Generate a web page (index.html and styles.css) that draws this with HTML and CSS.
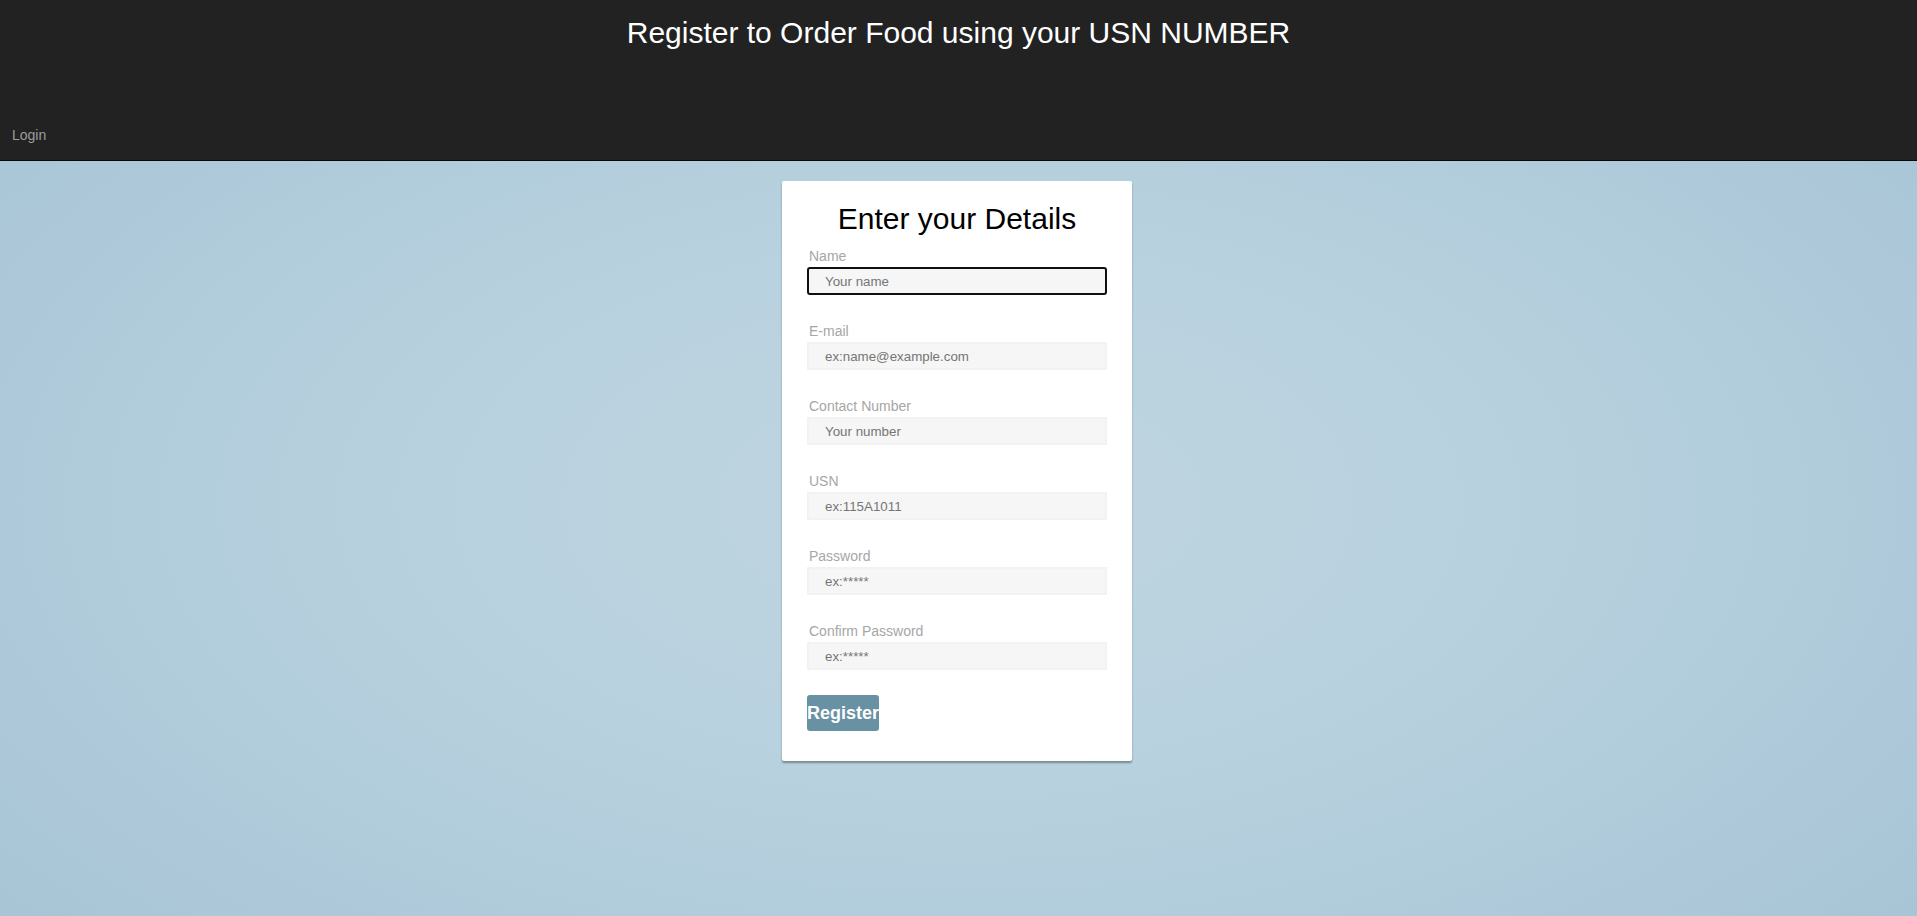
FILE: index.html
```html
<!DOCTYPE html>
<html lang="en">
<head>
<meta charset="utf-8">
<title>Register</title>
<link rel="stylesheet" href="styles.css">
</head>
<body>
<header class="topbar">
  <h1 class="topbar-title">Register to Order Food using your USN NUMBER</h1>
  <nav class="topbar-nav">
    <a class="topbar-link" href="#">Login</a>
  </nav>
</header>
<main class="page">
  <form class="card">
    <h2 class="card-title">Enter your Details</h2>
    <div class="fields">
      <div class="field">
        <label class="field-label" for="name">Name</label>
        <input class="field-input is-focused" id="name" type="text" placeholder="Your name">
      </div>
      <div class="field">
        <label class="field-label" for="email">E-mail</label>
        <input class="field-input" id="email" type="text" placeholder="ex:name@example.com">
      </div>
      <div class="field">
        <label class="field-label" for="phone">Contact Number</label>
        <input class="field-input" id="phone" type="text" placeholder="Your number">
      </div>
      <div class="field">
        <label class="field-label" for="usn">USN</label>
        <input class="field-input" id="usn" type="text" placeholder="ex:115A1011">
      </div>
      <div class="field">
        <label class="field-label" for="pw">Password</label>
        <input class="field-input" id="pw" type="password" placeholder="ex:*****">
      </div>
      <div class="field">
        <label class="field-label" for="pw2">Confirm Password</label>
        <input class="field-input" id="pw2" type="password" placeholder="ex:*****">
      </div>
    </div>
    <div class="actions">
      <button class="btn-register" type="button">Register</button>
    </div>
  </form>
</main>
</body>
</html>
```

FILE: styles.css
```css
html {
  height: 100%;
  background: #a6c4d6;
}

body {
  margin: 0;
  min-height: 100%;
  font-family: "Liberation Sans", Arial, sans-serif;
  background: radial-gradient(ellipse at 50% 55%, #bfd5e0 0%, #b9d2df 35%, #a5c3d5 100%);
  background-attachment: fixed;
}

.topbar {
  height: 160px;
  background: #222222;
  border-bottom: 1px solid #080808;
  display: flex;
  flex-direction: column;
  justify-content: space-between;
}

.topbar-title {
  margin: 16px 0 0;
  font-size: 30px;
  line-height: 33px;
  font-weight: normal;
  color: #ffffff;
  text-align: center;
}

.topbar-nav {
  display: flex;
  padding: 0 0 15px 12px;
}

.topbar-link {
  font-size: 14px;
  line-height: 20px;
  color: #9d9d9d;
  text-decoration: none;
}

.page {
  display: flex;
  justify-content: center;
  padding: 20px 3px 0 0;
}

.card {
  width: 300px;
  padding: 21px 25px 30px;
  background: #ffffff;
  border-radius: 2px;
  box-shadow: 0 2px 2px rgba(0, 0, 0, 0.35);
}

.card-title {
  margin: 0 0 13px;
  font-size: 30px;
  line-height: 33px;
  font-weight: normal;
  color: #000000;
  text-align: center;
}

.fields {
  display: flex;
  flex-direction: column;
  gap: 28px;
}

.field {
  display: flex;
  flex-direction: column;
}

.field-label {
  font-size: 14px;
  line-height: 16px;
  color: #a6a6a6;
  padding-left: 2px;
  margin-bottom: 3px;
}

.field-input {
  box-sizing: border-box;
  width: 300px;
  height: 28px;
  margin: 0;
  padding: 0 16px;
  border: 2px solid #f2f2f2;
  background: #f6f6f6;
  font-family: "Liberation Sans", Arial, sans-serif;
  font-size: 13.333px;
  color: #333333;
  outline: none;
}

.field-input::placeholder {
  color: #757575;
}

.field-input.is-focused {
  border-color: #101010;
  border-radius: 3px;
}

.actions {
  display: flex;
  padding-top: 25px;
}

.btn-register {
  height: 36px;
  padding: 0;
  border: none;
  border-radius: 3px;
  background: #6892a3;
  color: #ffffff;
  font-family: "Liberation Sans", Arial, sans-serif;
  font-size: 18px;
  font-weight: bold;
  white-space: nowrap;
  overflow: hidden;
  cursor: pointer;
}
```
